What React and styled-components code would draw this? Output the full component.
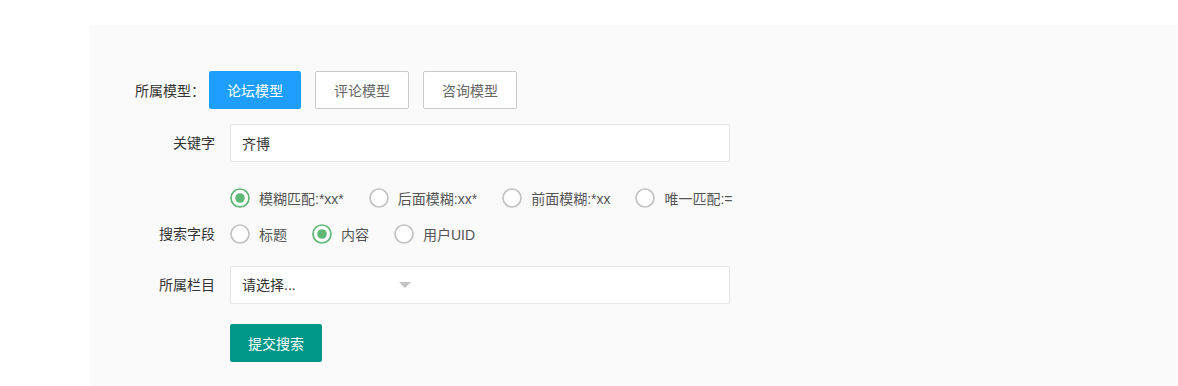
import React, { useState } from 'react'
import styled, { createGlobalStyle } from 'styled-components'

const GlobalStyle = createGlobalStyle`
  body {
    margin: 0;
    background: #fff;
    font-family: 'Liberation Sans', 'Noto Sans CJK SC', sans-serif;
    font-size: 14px;
    color: #333;
  }
`

const Panel = styled.div`
  margin: 25px 0 0 90px;
  min-height: 361px;
  box-sizing: border-box;
  background: #fafafa;
  padding: 46px 0 0 30px;
`

const ModelRow = styled.div`
  display: flex;
  align-items: center;
  padding-left: 15px;
  height: 38px;
`

const ModelLabel = styled.span`
  color: #333;
  margin-right: 4px;
`

const ModelBtn = styled.button`
  height: 38px;
  box-sizing: border-box;
  padding: 0 18px;
  margin-right: 14px;
  font-family: inherit;
  font-size: 14px;
  border-radius: 2px;
  cursor: pointer;
  border: ${(p) => (p.active ? 'none' : '1px solid #c9c9c9')};
  background: ${(p) => (p.active ? '#1e9fff' : '#fff')};
  color: ${(p) => (p.active ? '#fff' : '#666')};
`

const Item = styled.div`
  display: flex;
  align-items: center;
  margin-top: ${(p) => p.top || 0}px;
`

const Label = styled.label`
  width: 110px;
  flex: none;
  box-sizing: border-box;
  padding-right: 15px;
  text-align: right;
  line-height: ${(p) => p.lh || 38}px;
  color: #333;
`

const TextInput = styled.input`
  width: 500px;
  height: 38px;
  box-sizing: border-box;
  border: 1px solid #e6e6e6;
  border-radius: 2px;
  background: #fff;
  padding: 0 11px;
  font-family: inherit;
  font-size: 14px;
  color: #333;
  outline: none;
`

const RadioLine = styled.div`
  display: flex;
  align-items: center;
  height: 28px;
`

const Radio = styled.div`
  display: flex;
  align-items: center;
  gap: 9px;
  margin-right: 25px;
  color: #555;
  cursor: pointer;
`

const Select = styled.div`
  position: relative;
  width: 500px;
  height: 38px;
  box-sizing: border-box;
  border: 1px solid #e6e6e6;
  border-radius: 2px;
  background: #fff;
  padding: 0 11px;
  line-height: 36px;
  color: #333;
`

const Arrow = styled.i`
  position: absolute;
  left: 168px;
  top: 15px;
  width: 0;
  height: 0;
  border-left: 6px solid transparent;
  border-right: 6px solid transparent;
  border-top: 6px solid #c2c2c2;
`

const SubmitBtn = styled.button`
  margin-left: 110px;
  margin-top: 20px;
  height: 38px;
  padding: 0 18px;
  border: none;
  border-radius: 2px;
  background: #009688;
  color: #fff;
  font-family: inherit;
  font-size: 14px;
  cursor: pointer;
`

function RadioIcon({ checked }) {
  const c = checked ? '#5fb878' : '#c2c2c2'
  return (
    <svg width="20" height="20" viewBox="0 0 20 20">
      <circle cx="10" cy="10" r="9" fill="#fff" stroke={c} strokeWidth="1.7" />
      {checked && <circle cx="10" cy="10" r="4.8" fill={c} />}
    </svg>
  )
}

function RadioGroup({ options, value, onChange }) {
  return (
    <RadioLine>
      {options.map((o) => (
        <Radio key={o} onClick={() => onChange(o)}>
          <RadioIcon checked={value === o} />
          <span>{o}</span>
        </Radio>
      ))}
    </RadioLine>
  )
}

export default function App() {
  const [model, setModel] = useState('论坛模型')
  const [match, setMatch] = useState('模糊匹配:*xx*')
  const [field, setField] = useState('内容')
  const [keyword, setKeyword] = useState('齐博')

  return (
    <>
      <GlobalStyle />
      <Panel>
        <ModelRow>
          <ModelLabel>所属模型：</ModelLabel>
          {['论坛模型', '评论模型', '咨询模型'].map((m) => (
            <ModelBtn key={m} active={model === m} onClick={() => setModel(m)}>
              {m}
            </ModelBtn>
          ))}
        </ModelRow>

        <Item top={15}>
          <Label>关键字</Label>
          <TextInput value={keyword} onChange={(e) => setKeyword(e.target.value)} />
        </Item>

        <Item top={22}>
          <Label />
          <RadioGroup
            options={['模糊匹配:*xx*', '后面模糊:xx*', '前面模糊:*xx', '唯一匹配:=']}
            value={match}
            onChange={setMatch}
          />
        </Item>

        <Item top={8}>
          <Label lh={28}>搜索字段</Label>
          <RadioGroup options={['标题', '内容', '用户UID']} value={field} onChange={setField} />
        </Item>

        <Item top={18}>
          <Label>所属栏目</Label>
          <Select>
            请选择...
            <Arrow />
          </Select>
        </Item>

        <SubmitBtn>提交搜索</SubmitBtn>
      </Panel>
    </>
  )
}
